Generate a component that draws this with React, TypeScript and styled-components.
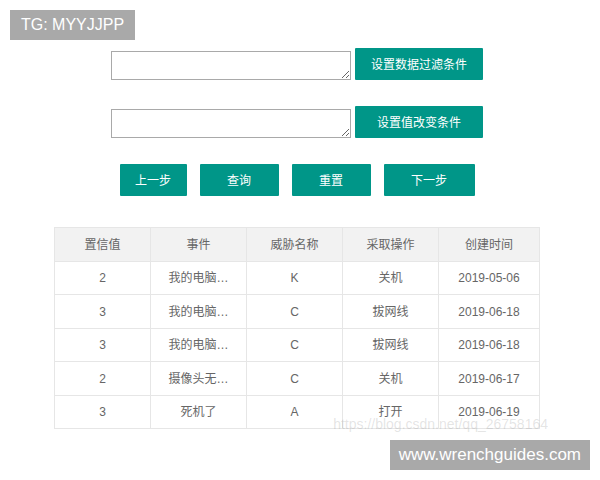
import React from "react";
import styled, { createGlobalStyle } from "styled-components";

const GlobalStyle = createGlobalStyle`
  *, *::before, *::after { box-sizing: border-box; }
  body {
    margin: 0;
    background: #fff;
    color: #666;
    font: 12px/16px "Liberation Sans", "Noto Sans CJK SC", sans-serif;
  }
`;

const Page = styled.div`
  position: relative;
  padding: 48px 60px 51px 54px;
`;

const Form = styled.form`
  display: flex;
  flex-direction: column;
  align-items: center;
  gap: 26px;
  margin-bottom: 31px;
`;

const Field = styled.div`
  display: flex;
  align-items: flex-end;
  gap: 4px;
`;

const Condition = styled.textarea`
  display: block;
  width: 240px;
  height: 29px;
  margin: 0;
  padding: 2px;
  border: 1px solid #a9a9a9;
  border-radius: 0;
  background: #fff;
  color: #333;
  font: inherit;
  overflow: hidden;
  resize: both;
`;

const Button = styled.button<{ $width: number }>`
  width: ${(p) => p.$width}px;
  height: 32px;
  padding: 1px 0 0;
  border: 0;
  border-radius: 1px;
  background: #009688;
  color: #fff;
  font: inherit;
  white-space: nowrap;
  cursor: pointer;
`;

const Actions = styled.div`
  display: flex;
  gap: 13px;
`;

const Table = styled.table`
  width: 100%;
  table-layout: fixed;
  border-collapse: collapse;
`;

const cell = `
  height: 34px;
  padding: 0 14px;
  border: 1px solid #e6e6e6;
  font-weight: 400;
  text-align: center;
  white-space: nowrap;
  overflow: hidden;
  text-overflow: ellipsis;
`;

const HeadCell = styled.th<{ $wide: boolean }>`
  ${cell}
  width: ${(p) => (p.$wide ? "101px" : "auto")};
  background: #f2f2f2;
`;

const Row = styled.tr`
  &:nth-child(odd) > td { height: 33px; }
`;

const Cell = styled.td`
  ${cell}
`;

const Tag = styled.div`
  position: absolute;
  top: 10px;
  left: 10px;
  padding: 0 11px;
  background: #a9a9a9;
  color: #fff;
  font-size: 16px;
  line-height: 30px;
`;

const SiteTag = styled(Tag)`
  top: auto;
  left: auto;
  right: 10px;
  bottom: 10px;
  padding: 0 9px;
  font-size: 17px;
`;

const SourceMark = styled.div`
  position: absolute;
  right: 52px;
  bottom: 48px;
  color: rgba(120, 120, 120, 0.2);
  font-size: 14px;
  line-height: 16px;
`;

const columns = ["置信值", "事件", "威胁名称", "采取操作", "创建时间"];

const rows = [
  ["2", "我的电脑…", "K", "关机", "2019-05-06"],
  ["3", "我的电脑…", "C", "拔网线", "2019-06-18"],
  ["3", "我的电脑…", "C", "拔网线", "2019-06-18"],
  ["2", "摄像头无…", "C", "关机", "2019-06-17"],
  ["3", "死机了", "A", "打开", "2019-06-19"],
];

export default function App() {
  return (
    <>
      <GlobalStyle />
      <Page>
        <Form onSubmit={(e) => e.preventDefault()}>
          <Field>
            <Condition aria-label="数据过滤条件" />
            <Button type="button" $width={128}>设置数据过滤条件</Button>
          </Field>
          <Field>
            <Condition aria-label="值改变条件" />
            <Button type="button" $width={128}>设置值改变条件</Button>
          </Field>
          <Actions>
            <Button type="button" $width={67}>上一步</Button>
            <Button type="submit" $width={79}>查询</Button>
            <Button type="reset" $width={79}>重置</Button>
            <Button type="button" $width={91}>下一步</Button>
          </Actions>
        </Form>
        <Table>
          <thead>
            <tr>
              {columns.map((name, i) => (
                <HeadCell key={name} scope="col" $wide={i === columns.length - 1}>
                  {name}
                </HeadCell>
              ))}
            </tr>
          </thead>
          <tbody>
            {rows.map((row, r) => (
              <Row key={r}>
                {row.map((value, c) => (
                  <Cell key={c}>{value}</Cell>
                ))}
              </Row>
            ))}
          </tbody>
        </Table>
        <SourceMark>https://blog.csdn.net/qq_26758164</SourceMark>
        <Tag>TG: MYYJJPP</Tag>
        <SiteTag>www.wrenchguides.com</SiteTag>
      </Page>
    </>
  );
}
